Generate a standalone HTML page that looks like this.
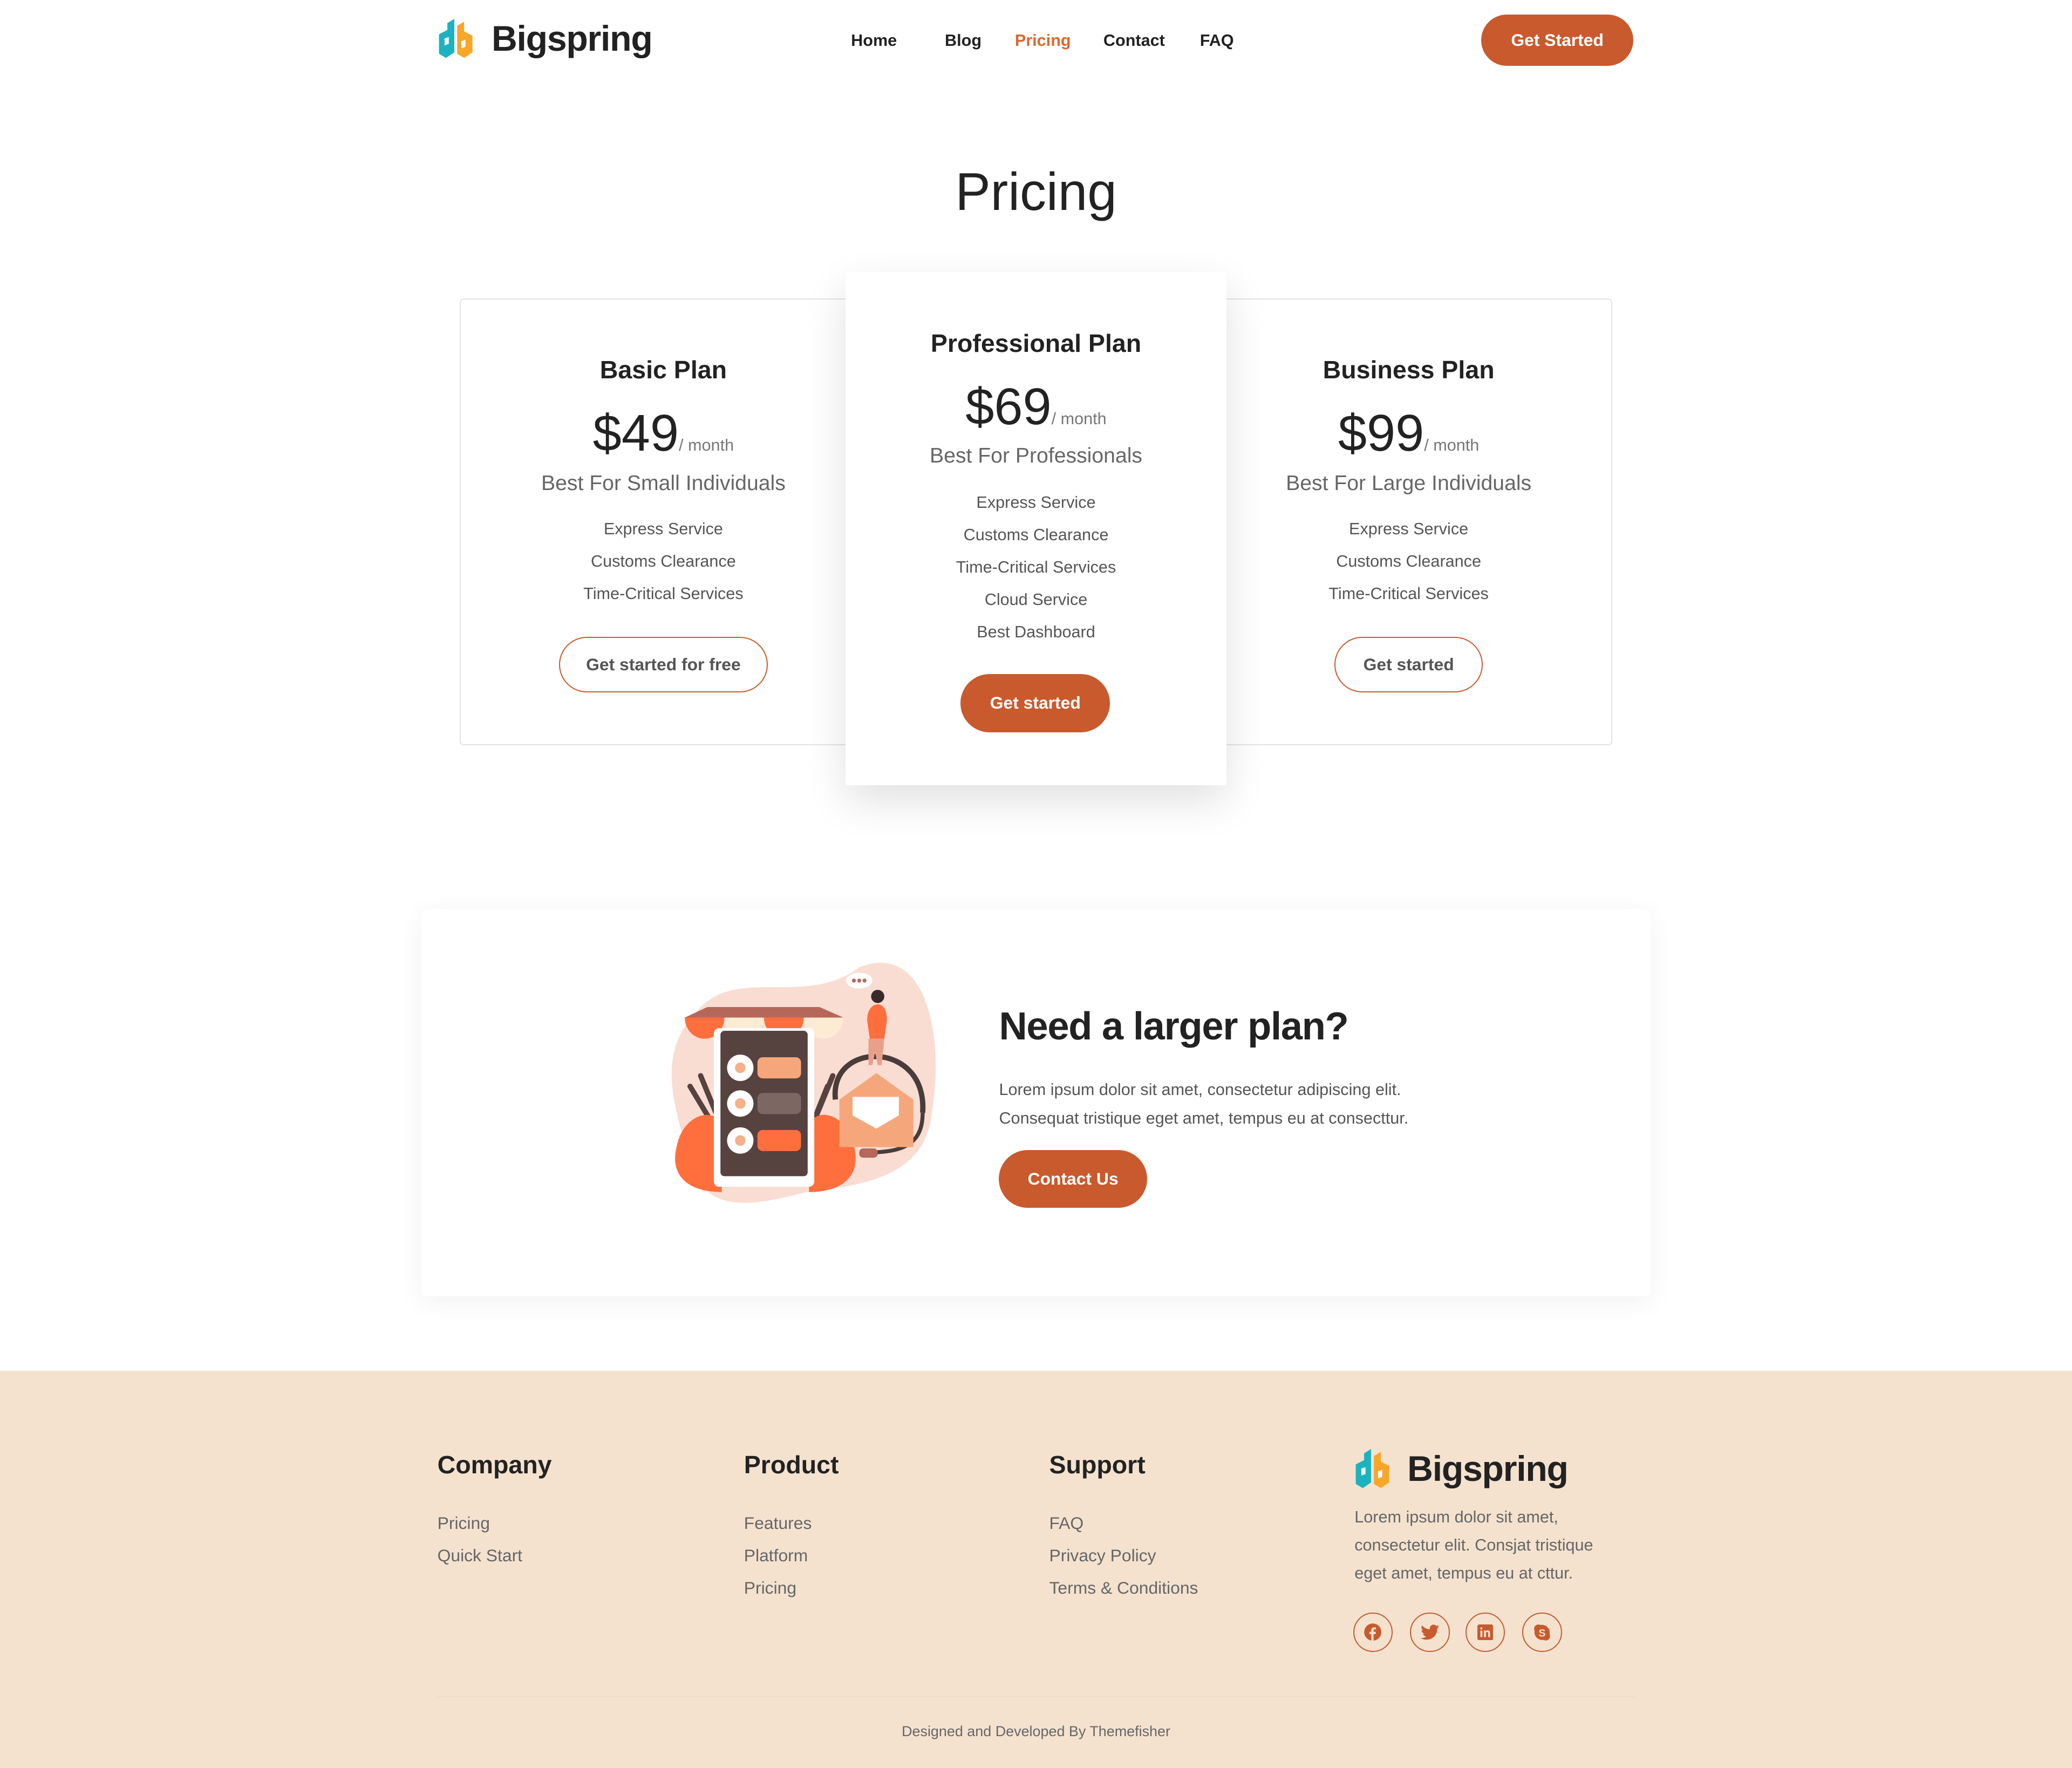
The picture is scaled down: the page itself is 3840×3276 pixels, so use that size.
<!DOCTYPE html>
<html><head><meta charset="utf-8"><style>
*{margin:0;padding:0;box-sizing:border-box}
html,body{width:3840px;height:3276px;overflow:hidden;background:#fff}
#w{zoom:2.449;width:1568px;height:1338px;position:relative;font-family:"Liberation Sans",sans-serif;color:#222}
.a{position:absolute;white-space:nowrap}
.c{text-align:center}
.nav{font-size:12.5px;font-weight:bold;color:#222;top:23px;line-height:16px}
.btn{position:absolute;border-radius:22px;display:flex;align-items:center;justify-content:center;font-weight:bold;font-size:13px}
.fill{background:#c95a2e;color:#fff}
.out{border:1px solid #c95a2e;color:#555}
.g{color:#666}
.feat{font-size:12.5px;color:#555;line-height:24.5px}
.fh{font-size:19px;font-weight:bold;top:1097px}
.fl{font-size:13px;color:#666;line-height:24.5px;top:1140px}
.ic{position:absolute;top:1220px;width:30px;height:30px;border:1.2px solid #c95a2e;border-radius:50%;display:flex;align-items:center;justify-content:center}
.pt{font-size:19px;font-weight:bold;line-height:24px}
</style></head><body><div id="w">
<svg class="a" style="left:331px;top:13px" width="38" height="32" viewBox="0 0 36 30"><path d="M1 12l6-3V4l5-3v24l-6 4-5-3z" fill="#1bb3bf"/><path d="M5 15l3-1v5l-3 1z" fill="#fff"/><path d="M14 6l5-3v7l6 3v12l-6 4-5-3z" fill="#f8a62a"/><path d="M17 17l3-1v5l-3 1z" fill="#fff"/></svg>
<div class="a" style="left:372px;top:14px;font-size:27px;font-weight:bold;color:#222;letter-spacing:-0.5px">Bigspring</div>
<div class="a nav" style="left:644px">Home</div>
<div class="a nav" style="left:715px">Blog</div>
<div class="a nav" style="left:768px;color:#d8692f">Pricing</div>
<div class="a nav" style="left:835px">Contact</div>
<div class="a nav" style="left:908px">FAQ</div>
<div class="btn fill" style="left:1121px;top:11px;width:115px;height:39px;border-radius:20px">Get Started</div>

<div class="a c" style="left:0;width:1568px;top:120px;font-size:40px;line-height:50px;color:#222">Pricing</div>

<div class="a" style="left:348px;top:226px;width:872px;height:338px;border:1px solid #e3e3e3;border-radius:3px;background:#fff"></div>
<div class="a c pt" style="left:355px;width:294px;top:268px">Basic Plan</div>
<div class="a c" style="left:355px;width:294px;top:305px;line-height:46px"><span style="font-size:39px">$49</span><span style="font-size:12.5px;color:#777">/ month</span></div>
<div class="a c g" style="left:355px;width:294px;top:355px;font-size:16px;line-height:22px">Best For Small Individuals</div>
<div class="a c feat" style="left:355px;width:294px;top:388px">Express Service<br>Customs Clearance<br>Time-Critical Services</div>
<div class="btn out" style="left:423px;top:482px;width:158px;height:42px">Get started for free</div>

<div class="a c pt" style="left:920px;width:292px;top:268px">Business Plan</div>
<div class="a c" style="left:920px;width:292px;top:305px;line-height:46px"><span style="font-size:39px">$99</span><span style="font-size:12.5px;color:#777">/ month</span></div>
<div class="a c g" style="left:920px;width:292px;top:355px;font-size:16px;line-height:22px">Best For Large Individuals</div>
<div class="a c feat" style="left:920px;width:292px;top:388px">Express Service<br>Customs Clearance<br>Time-Critical Services</div>
<div class="btn out" style="left:1010px;top:482px;width:112px;height:42px">Get started</div>

<div class="a" style="left:640px;top:206px;width:288px;height:388px;background:#fff;box-shadow:0 12px 30px rgba(0,0,0,.12)"></div>
<div class="a c pt" style="left:640px;width:288px;top:248px">Professional Plan</div>
<div class="a c" style="left:640px;width:288px;top:285px;line-height:46px"><span style="font-size:39px">$69</span><span style="font-size:12.5px;color:#777">/ month</span></div>
<div class="a c g" style="left:640px;width:288px;top:334px;font-size:16px;line-height:22px">Best For Professionals</div>
<div class="a c feat" style="left:640px;width:288px;top:368px">Express Service<br>Customs Clearance<br>Time-Critical Services<br>Cloud Service<br>Best Dashboard</div>
<div class="btn fill" style="left:727px;top:510px;width:113px;height:44px">Get started</div>

<div class="a" style="left:319px;top:688px;width:930px;height:293px;background:#fff;box-shadow:0 4px 20px rgba(0,0,0,.06);border-radius:4px"></div>
<svg class="a" style="left:500px;top:722px" width="212" height="200" viewBox="0 0 212 200">
<path d="M30 40C60 10 110 40 150 10 200 -10 215 60 205 120 200 170 150 175 110 180 70 190 30 200 20 150 5 100 0 70 30 40z" fill="#f9ddd2"/>
<g stroke="#56423e" stroke-width="4" stroke-linecap="round"><path d="M22 100l18 30"/><path d="M30 92l14 34"/><path d="M130 92l-14 34"/><path d="M126 100l-12 30"/></g>
<path d="M12 145c5-25 30-30 34-15v50c-25 0-40-12-34-35z" fill="#ff6e3d"/>
<path d="M146 145c-5-25-30-30-34-15v50c25 0 40-12 34-35z" fill="#ff6e3d"/>
<path d="M18 48L35 40H120L138 48z" fill="#b5675a"/>
<path d="M18 48a7.5 8 0 0 0 30 0z" fill="#ff6e3d"/>
<path d="M48 48a7.5 8 0 0 0 30 0z" fill="#fdebd3"/>
<path d="M78 48a7.5 8 0 0 0 30 0z" fill="#ff6e3d"/>
<path d="M108 48a7.5 8 0 0 0 30 0z" fill="#fdebd3"/>
<path d="M138 48a7.5 8 0 0 0 -0 0z" fill="#ff6e3d"/>
<rect x="40" y="56" width="76" height="120" rx="4" fill="#fff"/>
<rect x="45" y="58" width="66" height="110" rx="3" fill="#56423e"/>
<path d="M18 48h120a0 0 0 0 1 0 0a15 8 0 0 1 -0 0z" fill="none"/>
<g fill="#fff"><circle cx="60" cy="86" r="10"/><circle cx="60" cy="113" r="10"/><circle cx="60" cy="141" r="10"/></g>
<g fill="#f6b08a"><circle cx="60" cy="86" r="4"/><circle cx="60" cy="113" r="4"/><circle cx="60" cy="141" r="4"/></g>
<rect x="73" y="78" width="33" height="16" rx="4" fill="#f5a77b"/>
<rect x="73" y="105" width="33" height="16" rx="4" fill="#7d6762"/>
<rect x="73" y="133" width="33" height="16" rx="4" fill="#ff6e3d"/>
<path d="M132 110c-5-45 70-45 66 10" fill="none" stroke="#4a3c3a" stroke-width="4"/>
<path d="M198 120c0 20-10 30-40 30" fill="none" stroke="#4a3c3a" stroke-width="3"/>
<rect x="150" y="147" width="14" height="7" rx="3" fill="#b5675a"/>
<path d="M135 110l28-20 28 20v36h-56z" fill="#f5a77b"/>
<path d="M145 108h35v14l-17 10-18-10z" fill="#fff"/>
<path d="M156 50c0-8 4-12 8-12s7 4 7 12l-2 14h-11z" fill="#ff6e3d"/>
<path d="M157 64h12l-2 20h-3l-2-10-2 10h-3z" fill="#e9a08a"/>
<circle cx="164" cy="32" r="5" fill="#3a2b2a"/>
<ellipse cx="150" cy="20" rx="10" ry="6" fill="#fff"/>
<g fill="#b5675a"><circle cx="146" cy="20" r="1.5"/><circle cx="150" cy="20" r="1.5"/><circle cx="154" cy="20" r="1.5"/></g>
</svg>
<div class="a" style="left:756px;top:757px;font-size:29.5px;font-weight:bold;line-height:40px;letter-spacing:-0.5px">Need a larger plan?</div>
<div class="a" style="left:756px;top:814px;font-size:12.5px;color:#555;line-height:21.5px">Lorem ipsum dolor sit amet, consectetur adipiscing elit.<br>Consequat tristique eget amet, tempus eu at consecttur.</div>
<div class="btn fill" style="left:756px;top:870px;width:112px;height:44px">Contact Us</div>

<div class="a" style="left:0;top:1037px;width:1568px;height:301px;background:#f4e2cf"></div>
<div class="a fh" style="left:331px">Company</div>
<div class="a fh" style="left:563px">Product</div>
<div class="a fh" style="left:794px">Support</div>
<div class="a fl" style="left:331px">Pricing<br>Quick Start</div>
<div class="a fl" style="left:563px">Features<br>Platform<br>Pricing</div>
<div class="a fl" style="left:794px">FAQ<br>Privacy Policy<br>Terms &amp; Conditions</div>
<svg class="a" style="left:1025px;top:1095px" width="38" height="32" viewBox="0 0 36 30"><path d="M1 12l6-3V4l5-3v24l-6 4-5-3z" fill="#1bb3bf"/><path d="M5 15l3-1v5l-3 1z" fill="#fff"/><path d="M14 6l5-3v7l6 3v12l-6 4-5-3z" fill="#f8a62a"/><path d="M17 17l3-1v5l-3 1z" fill="#fff"/></svg>
<div class="a" style="left:1065px;top:1096px;font-size:27px;font-weight:bold;color:#222;letter-spacing:-0.5px">Bigspring</div>
<div class="a" style="left:1025px;top:1137px;font-size:12.5px;color:#666;line-height:21.3px">Lorem ipsum dolor sit amet,<br>consectetur elit. Consjat tristique<br>eget amet, tempus eu at cttur.</div>
<div class="ic" style="left:1024px"><svg width="14" height="14" viewBox="0 0 14 14"><circle cx="7" cy="7" r="6.5" fill="#c95a2e"/><path d="M7.6 14V8.5h1.6l.2-1.7H7.6V5.8c0-.5.2-.8.8-.8h1V3.5c-.3 0-.8-.1-1.4-.1-1.3 0-2.1.8-2.1 2.2v1.2H4.5v1.7h1.4V14z" fill="#f4e2cf"/></svg></div>
<div class="ic" style="left:1067px"><svg width="14" height="12" viewBox="0 0 24 20"><path d="M24 2.4a10 10 0 0 1-2.8.8A5 5 0 0 0 23.3.4a10 10 0 0 1-3.1 1.2A4.9 4.9 0 0 0 11.8 6 14 14 0 0 1 1.7.9a4.9 4.9 0 0 0 1.5 6.6A5 5 0 0 1 1 6.9a4.9 4.9 0 0 0 3.9 4.8 5 5 0 0 1-2.2.1 4.9 4.9 0 0 0 4.6 3.4A9.9 9.9 0 0 1 0 17.3 14 14 0 0 0 7.5 19.5c9.1 0 14-7.5 14-14v-.6A10 10 0 0 0 24 2.4z" fill="#c95a2e"/></svg></div>
<div class="ic" style="left:1109px"><svg width="12" height="12" viewBox="0 0 12 12"><rect width="12" height="12" rx="1.5" fill="#c95a2e"/><path d="M2.3 4.6h1.5v5H2.3zM3 2.2a.8.8 0 1 1 0 1.6.8.8 0 0 1 0-1.6zM5 4.6h1.4v.7c.3-.5.8-.8 1.5-.8 1.4 0 1.7.9 1.7 2.1v3H8.2V7c0-.6 0-1.3-.8-1.3s-.9.6-.9 1.3v2.6H5z" fill="#f4e2cf"/></svg></div>
<div class="ic" style="left:1152px"><svg width="13" height="13" viewBox="0 0 14 14"><path d="M4 .5a3.5 3.5 0 0 0-3.5 3.5c0 .6.2 1.2.4 1.7A6.3 6.3 0 0 0 8.3 13c.5.3 1.1.5 1.7.5a3.5 3.5 0 0 0 3.5-3.5c0-.6-.2-1.2-.4-1.7A6.3 6.3 0 0 0 5.7.9C5.2.6 4.6.5 4 .5z" fill="#c95a2e"/><text x="7" y="10.3" font-size="8.5" font-weight="bold" text-anchor="middle" fill="#f4e2cf" font-family="Liberation Sans">S</text></svg></div>
<div class="a" style="left:331px;top:1283px;width:906px;height:1px;background:#f0dccb"></div>
<div class="a c" style="left:0;width:1568px;top:1303px;font-size:11px;color:#666;line-height:14px">Designed and Developed By Themefisher</div>
</div></body></html>
